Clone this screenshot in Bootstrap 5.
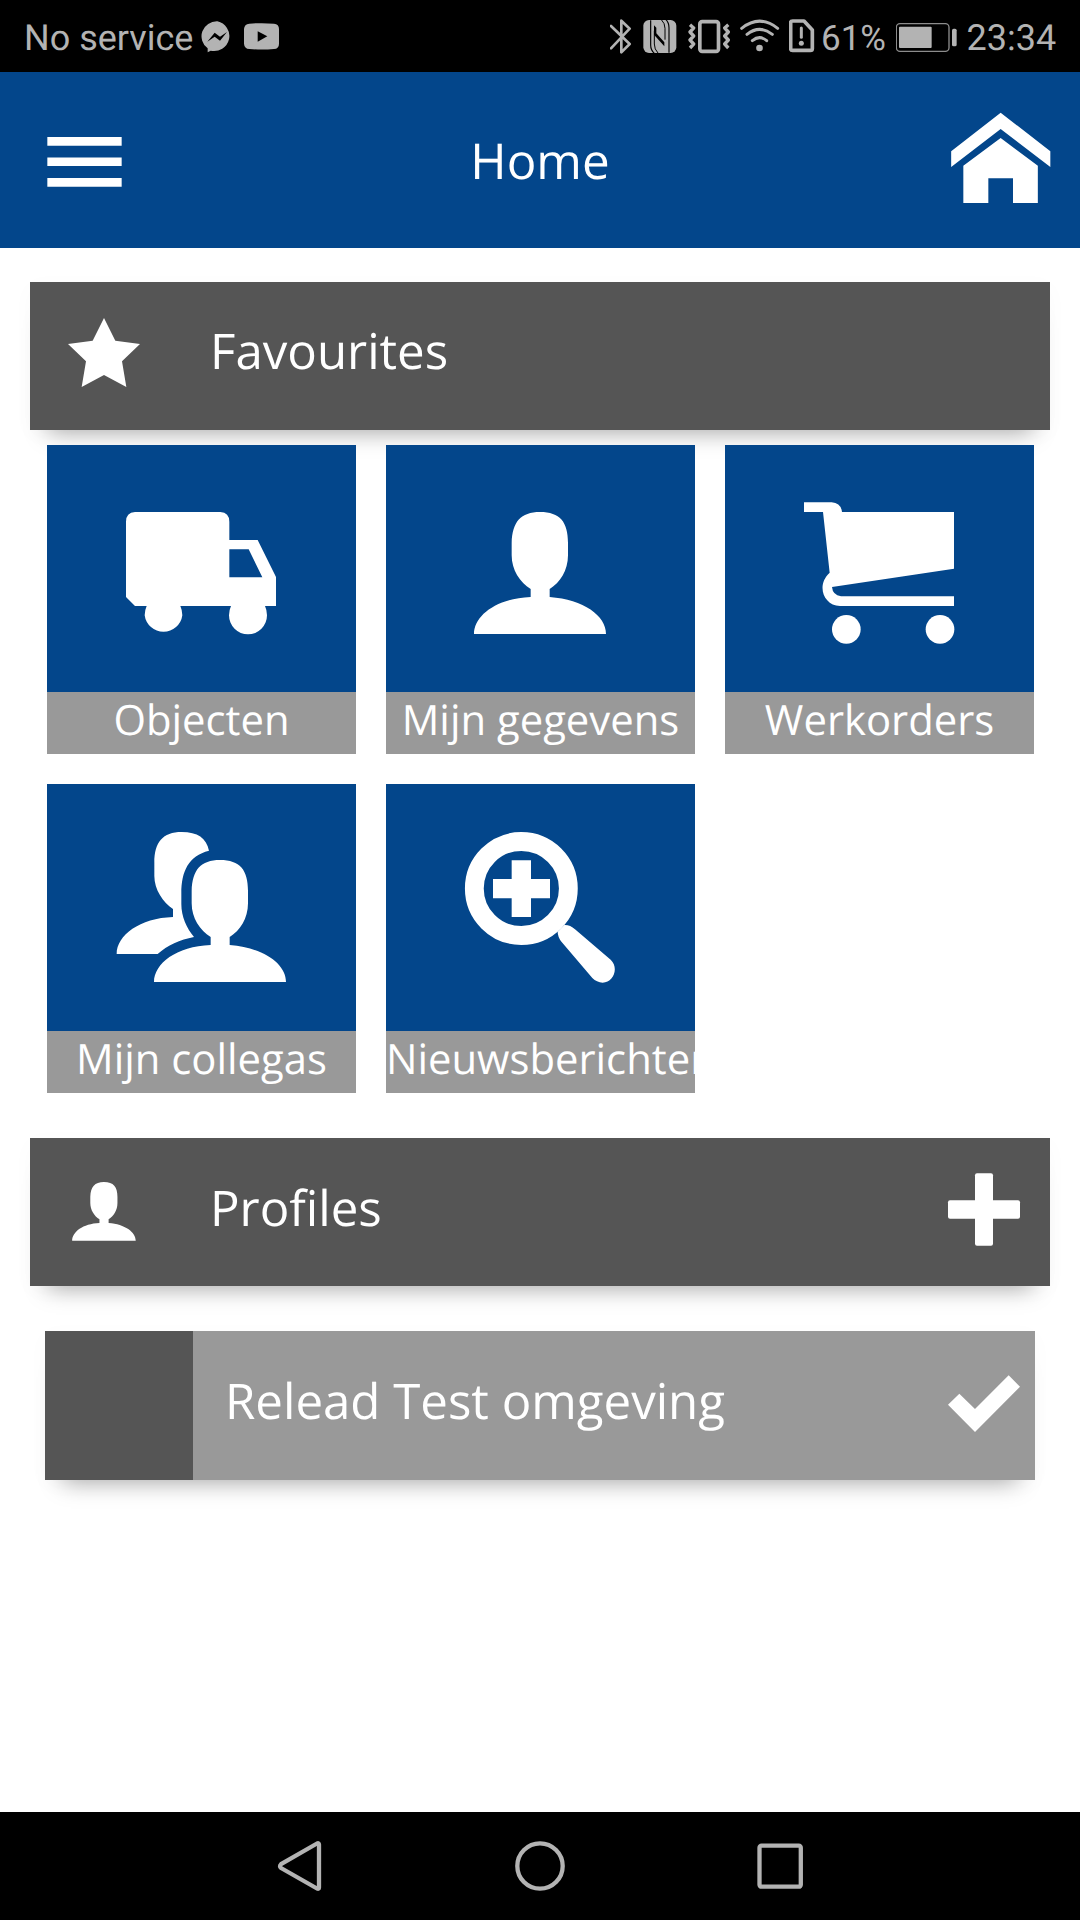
<!DOCTYPE html>
<html lang="nl">
<head>
<meta charset="utf-8">
<meta name="viewport" content="width=device-width, initial-scale=1">
<title>Home</title>
<link rel="stylesheet" href="https://cdn.jsdelivr.net/npm/bootstrap@5.3.0/dist/css/bootstrap.min.css">
<style>
  :root { --brand: #03468b; --bar: #555; --soft: #999; --sys: #b3b3b3; }
  body { font-family: "Open Sans", "Noto Sans", sans-serif; height: 1920px; overflow: hidden; text-rendering: geometricPrecision; }
  svg { display: block; flex-shrink: 0; }
  .status-bar { height: 72px; background: #000; color: var(--sys); font: 36px/72px Roboto, sans-serif; }
  .status-bar svg { height: 72px; }
  .status-left { width: 610px; padding-left: 24px; }
  .carrier { width: 176px; padding-top: 2px; }
  .level { width: 75px; padding-top: 3px; font-size: 35px; }
  .clock { padding-top: 2px; }
  .app-bar { height: 176px; background: var(--brand); padding: 0 29px 0 47px; }
  .bar-side { flex: 0 0 100px; }
  .app-title { font-size: 49.3px; line-height: 176px; margin-left: -18px; padding-top: 1px; }
  .app-main { padding: 34px 30px 0; }
  .section-bar, .profile-row { background: var(--bar); box-shadow: 0 20px 22px -18px rgba(0,0,0,.34), 0 5px 22px rgba(0,0,0,.025); font-size: 49.2px; }
  .section-bar { height: 148px; }
  .section-label { line-height: 140px; padding-left: 32px; }
  .label-raised { line-height: 138px; }
  .tiles { padding: 15px 16px 0 17px; gap: 30px; margin-bottom: 45px; }
  .tile { width: 309px; height: 309px; background: var(--brand); }
  .tile svg { width: 309px; height: 247px; }
  .tile-label { height: 62px; line-height: 56px; font-size: 41.8px; background: var(--soft); }
  .profile-row { height: 149px; margin: 45px 15px 0; background: var(--soft); }
  .profile-thumb { width: 148px; background: var(--bar); }
  .sys-nav { height: 108px; background: #000; }
</style>
<script src="https://cdn.jsdelivr.net/npm/bootstrap@5.3.0/dist/js/bootstrap.bundle.min.js"></script>
</head>
<body class="d-flex flex-column bg-white">

<div class="status-bar d-flex flex-shrink-0 text-nowrap">
  <div class="status-left d-flex flex-shrink-0">
    <span class="carrier">No service</span>
    <svg width="43" viewBox="598 0 129 216" fill="#b3b3b3"><path d="M650 64a46 45 0 1 1-20 88l-9 5v-12A46 45 0 0 1 650 64z"/><path d="M620 125l22-27 16 12 21-14-21 26-16-12z" fill="#000"/></svg>
    <svg width="38" viewBox="729 0 114 216"><path fill="#b3b3b3" d="M748 71q37-3 74 0 15 1 15 16v44q0 15-15 16-37 3-74 0-15-1-16-16V87q1-15 16-16z"/><path d="M773 94v31l29-16z"/></svg>
  </div>
  <svg width="32.67" viewBox="60 0 98 216" fill="none" stroke="#b3b3b3" stroke-width="8"><path d="M63 78l56 54-25 25V62l25 24-56 59" stroke-linejoin="round" stroke-linecap="round"/></svg>
  <svg width="45" viewBox="158 0 135 216"><rect x="159" y="60" width="99" height="99" rx="17" fill="#b3b3b3"/><path d="M181 61v74q0 16 11 25M236 158V83q0-16-10-25" fill="none" stroke="#000" stroke-width="3.500"/><path d="M224 119V85q0-15-11-26M192 92v40q0 16 11 27" fill="none" stroke="#000" stroke-width="3"/><path d="M191 76v28l31 35v-12l-24-27v-17z" fill="#000"/></svg>
  <svg width="52" viewBox="293 0 156 216" fill="none" stroke="#b3b3b3"><rect x="328.500" y="65" width="56" height="89" rx="7" stroke-width="11"/><path d="M299 74l11 10-11 12 11 12-11 12 11 12-11 12M414 74l-11 10 11 12-11 12 11 12-11 12 11 12" stroke-width="10" stroke-linejoin="round"/></svg>
  <svg width="49.33" viewBox="449 0 148 216" fill="none" stroke="#b3b3b3" stroke-width="9" stroke-linecap="round"><path d="M454 85Q508 42 562 85M470 103q38-30 76 0M486 122q22-18 43 0"/><circle cx="507.500" cy="144" r="10" fill="#b3b3b3" stroke="none"/></svg>
  <svg width="32" viewBox="597 0 96 216" fill="none" stroke="#b3b3b3" stroke-width="11"><path d="M608 63h34l25 27v56q0 5-6 5h-53q-6 0-6-5V68q0-5 6-5z" stroke-linejoin="round"/><path d="M634 84v28" stroke-width="9" stroke-linecap="round"/><circle cx="634" cy="130" r="7.500" fill="#b3b3b3" stroke="none"/></svg>
  <span class="level">61%</span>
  <svg width="70.500" viewBox="919 0 211.500 216"><rect x="920" y="71" width="158" height="83" rx="11" fill="none" stroke="#8c8c8c" stroke-width="4"/><rect x="928" y="80" width="98" height="64" rx="3" fill="#b3b3b3"/><rect x="1087" y="86" width="14" height="53" rx="5" fill="#b3b3b3"/></svg>
  <span class="clock">23:34</span>
</div>

<nav class="app-bar d-flex align-items-start justify-content-between flex-shrink-0 text-white">
  <svg class="bar-side" width="100" height="176" viewBox="141 216 300 528" fill="#fff" role="img" aria-label="Menu"><path d="M142 411h223v26H142zM142 472.500h223v25.500H142zM142 534h223v26H142z"/></svg>
  <span class="app-title flex-grow-1 text-center">Home</span>
  <svg class="bar-side" width="100" height="176" viewBox="153 -24 300 528" fill="#fff" role="img" aria-label="Home"><path d="M302 98l149 116v47L302 147 153.500 261v-47zM302 174l111.500 83v112H339v-74h-74v74h-75V257z"/></svg>
</nav>

<main class="app-main flex-grow-1 text-white text-nowrap">
  <section class="section-bar d-flex">
    <svg width="148" height="148" viewBox="30 36 444 444" fill="#fff"><path d="M252 144l34 68 74 10-54 52 13 77-67-36-67 36 13-77-54-52 74-10z"/></svg>
    <span class="section-label label-raised">Favourites</span>
  </section>

  <section class="tiles d-flex flex-wrap">
    <a class="tile d-block text-decoration-none text-white overflow-hidden">
      <svg viewBox="21 15 927 741" fill="#fff"><path d="M285 216h256q27 2 27 29v55h85l55 111v87h-33q6 13 6 28a57 57 0 0 1-114 0q0-15 6-28H421q6 13 6 28a57 57 0 0 1-113 0q0-15 6-28h-35l-27-27V245q0-27 27-29zM568 328v84h99l-41-84z" fill-rule="evenodd"/></svg>
      <div class="tile-label text-center">Objecten</div>
    </a>
    <a class="tile d-block text-decoration-none text-white overflow-hidden">
      <svg viewBox="18 15 927 741" fill="#fff"><path d="M480 216c60 0 84 30 84 92v38c0 46-24 82-55 101v24c102 8 169 56 169 111H282c0-55 67-107 170-111v-24c-32-19-57-57-57-101v-38c2-62 27-92 85-92z"/></svg>
      <div class="tile-label text-center">Mijn gegevens</div>
    </a>
    <a class="tile d-block text-decoration-none text-white overflow-hidden">
      <svg viewBox="45 15 927 741" fill="#fff"><path d="M282 187h83q28 2 31 29h336v170l-366 55q2 24 27 28h339v29H390c-50-2-72-63-31-100l-20-182h-57z"/><circle cx="409" cy="568" r="43"/><circle cx="690" cy="568" r="43"/></svg>
      <div class="tile-label text-center">Werkorders</div>
    </a>
    <a class="tile d-block text-decoration-none text-white overflow-hidden">
      <svg viewBox="21 42 927 741" fill="#fff"><path d="M425 186c48 0 74 18 82 56-62 16-83 62-83 128v32c0 38 16 73 38 99-42 8-80 25-109 51H230c0-56 70-108 169-111v-24c-30-20-56-58-56-99v-40c0-61 25-92 82-92z"/><path d="M540 270c60 0 84 30 84 92v38c0 46-24 82-55 101v24c102 8 169 56 169 111H342c0-55 67-107 170-111v-24c-32-19-57-57-57-101v-38c2-62 27-92 85-92z"/></svg>
      <div class="tile-label text-center">Mijn collegas</div>
    </a>
    <a class="tile d-block text-decoration-none text-white overflow-hidden">
      <svg viewBox="18 42 927 741" fill="#fff"><circle cx="424" cy="355.500" r="141" fill="none" stroke="#fff" stroke-width="56.500"/><path d="M395 271h58v56h57v58h-57v56h-58v-56h-56v-58h56zM533 485l20-20q17-1 32 13l107 91c26 25 8 69-24 69q-18-1-31-14l-92-108q-12-15-12-31z"/></svg>
      <div class="tile-label">Nieuwsberichten</div>
    </a>
  </section>

  <section class="section-bar d-flex">
    <svg width="148" height="148" viewBox="30 54 444 444" fill="#fff"><path transform="translate(20.500 82) scale(.482)" d="M480 216c60 0 84 30 84 92v38c0 46-24 82-55 101v24c102 8 169 56 169 111H282c0-55 67-107 170-111v-24c-32-19-57-57-57-101v-38c2-62 27-92 85-92z"/></svg>
    <span class="section-label flex-grow-1">Profiles</span>
    <svg width="148" height="148" viewBox="606 54 444 444" fill="#fff"><rect x="825" y="159.500" width="54" height="218" rx="6"/><rect x="744" y="241" width="216" height="55.500" rx="6"/></svg>
  </section>

  <section class="profile-row d-flex">
    <div class="profile-thumb"></div>
    <span class="section-label flex-grow-1">Relead Test omgeving</span>
    <svg width="149" height="149" viewBox="558 633 447 447" fill="#fff"><path d="M778 821l47 46 101-101 34 34-135 136-81-82z"/></svg>
  </section>
</main>

<footer class="sys-nav flex-shrink-0">
  <svg width="1080" height="108" viewBox="0 1812 1080 108" fill="none" stroke="#b3b3b3" stroke-width="4.300" stroke-linejoin="round"><path d="M317 1843.500q2-.8 2 1v43q0 1.800-2 1l-36-20.500q-2-1.800 0-3.800z"/><circle cx="540" cy="1866" r="22.700"/><rect x="759.500" y="1845.700" width="41.300" height="41" rx="2"/></svg>
</footer>
</body>
</html>
